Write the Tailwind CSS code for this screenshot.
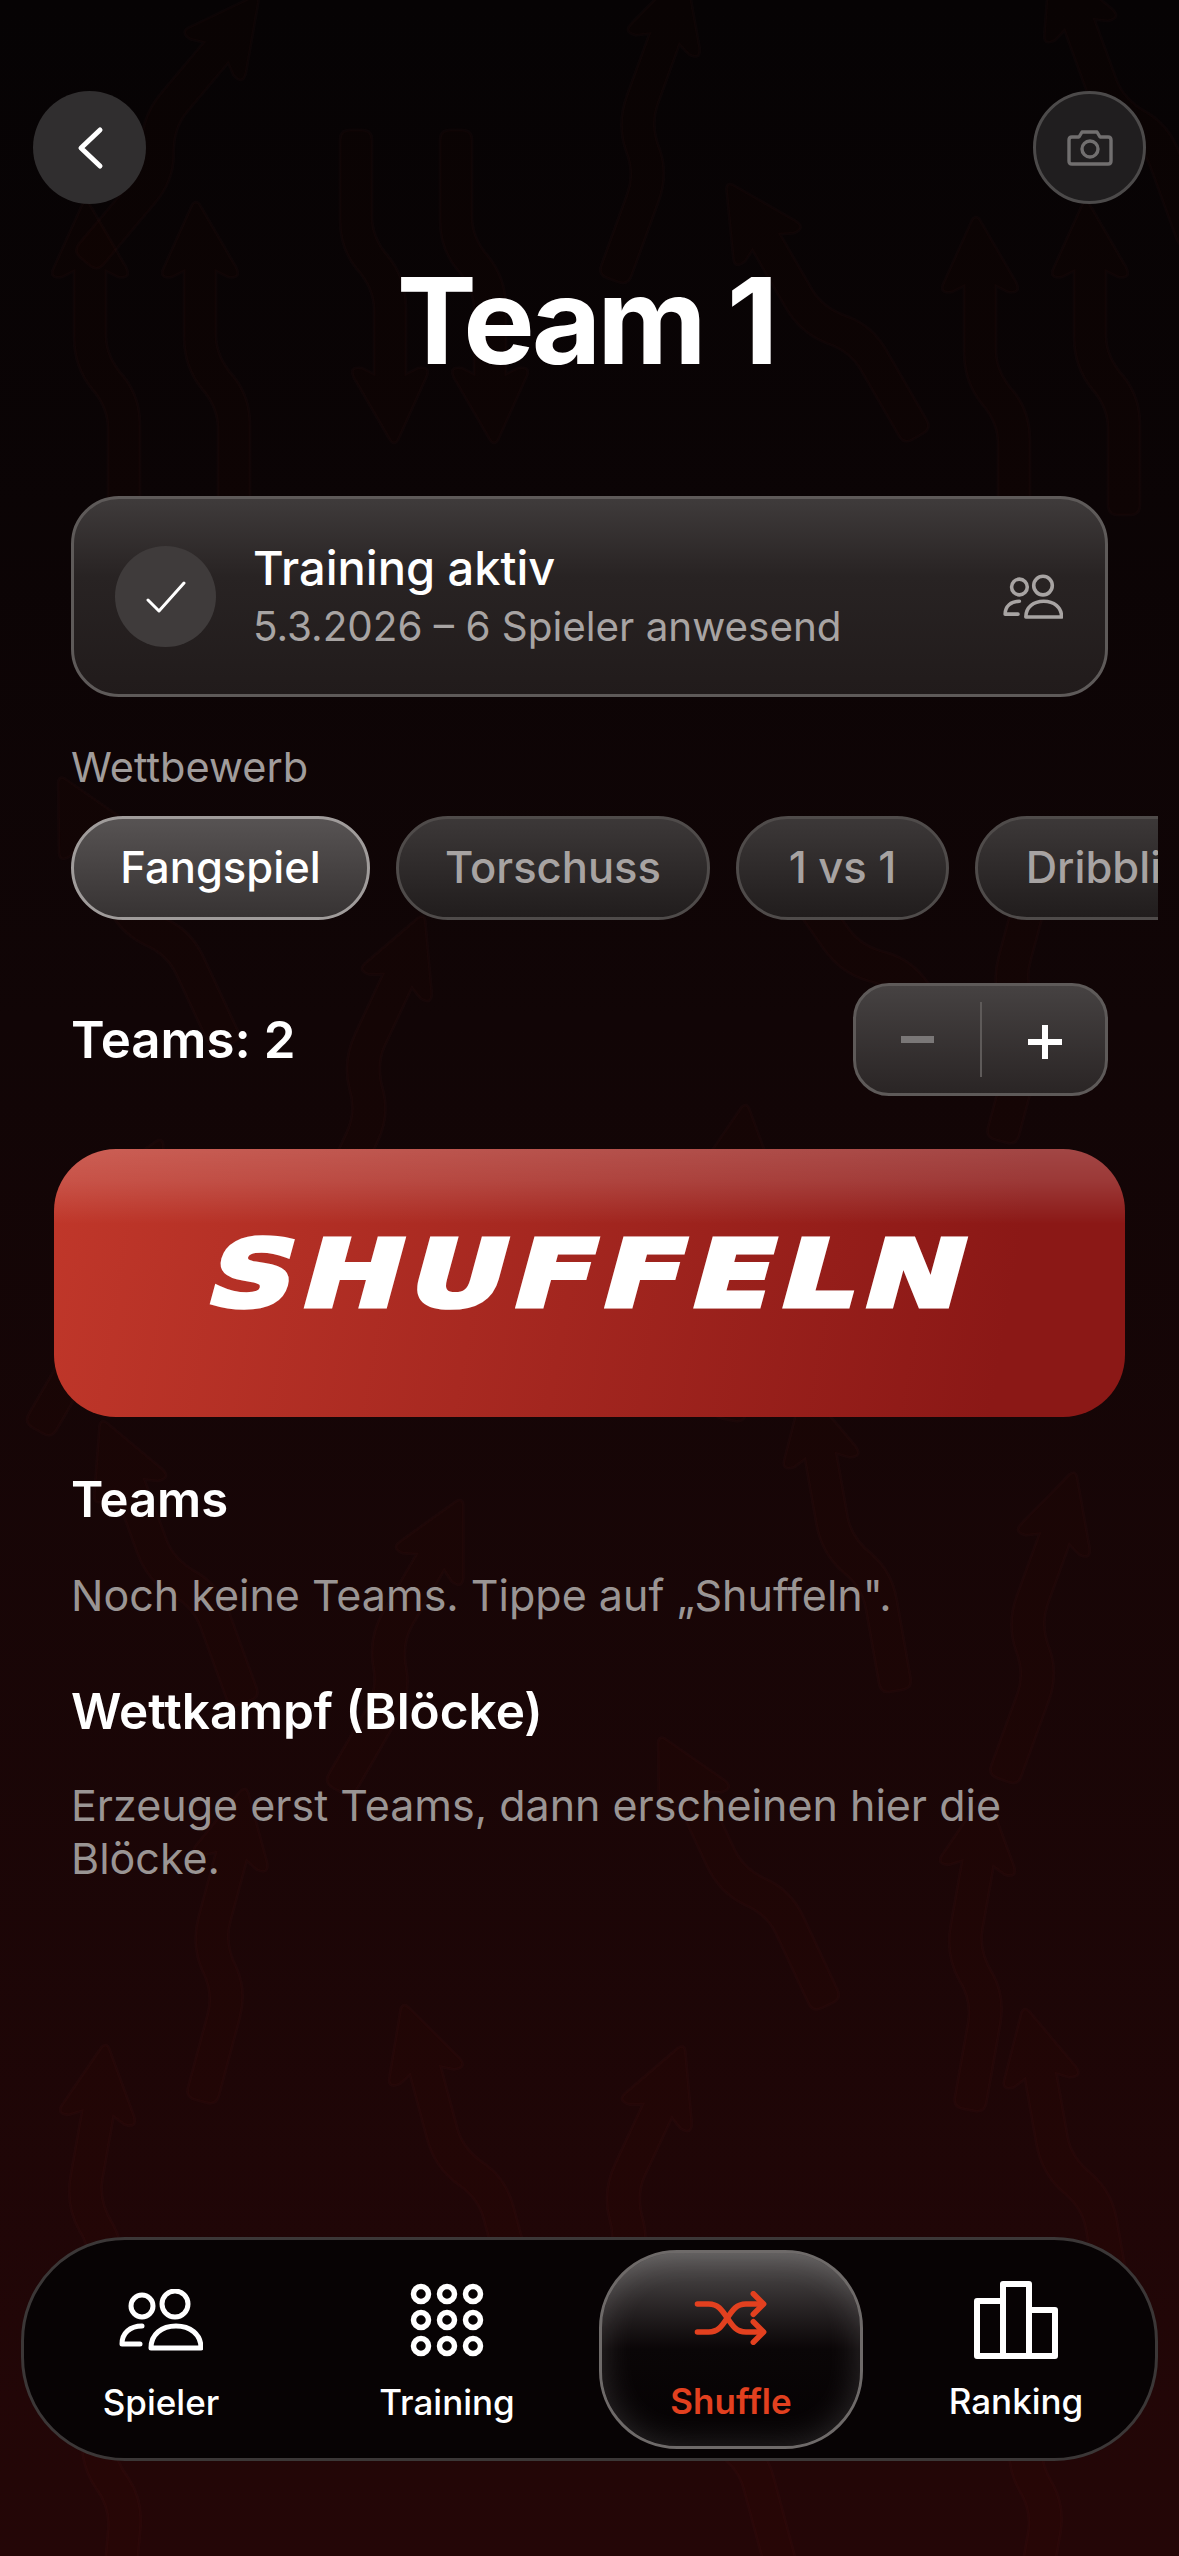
<!doctype html>
<html lang="de">

<head>
  <meta charset="UTF-8" />
  <meta name="viewport" content="width=device-width, initial-scale=1.0" />
  <title>Team 1</title>
  <script src="https://cdn.jsdelivr.net/npm/@tailwindcss/browser@4"></script>
</head>

<body>
  <div id="app"
    class="relative w-[1179px] h-[2556px] overflow-hidden flex flex-col font-['Inter',sans-serif] text-white bg-linear-to-b from-[#060304] via-[#110506] via-40% to-[#240607]">

    <!-- faint arrow pattern -->
    <svg class="absolute inset-0 w-full h-full" viewBox="0 0 1179 2556" fill="none" aria-hidden="true">
      <defs>
        <path id="swoop" fill="#ff2a10" fill-opacity=".014" stroke="#ff9080" stroke-opacity=".022" stroke-width="3"
          d="M50 0 86 62q6 12-8 10l-12-6v64q0 22 18 42 16 20 16 48v80q0 10-10 10H78q-10 0-10-10v-76q0-22-16-40-18-22-18-52V66l-12 6q-14 2-8-10L42 0q4-6 8 0Z" />
      </defs>
      <use href="#swoop" transform="translate(40 205)" />
      <use href="#swoop" transform="translate(150 205)" />
      <use href="#swoop" transform="translate(440 440) rotate(180)" />
      <use href="#swoop" transform="translate(540 440) rotate(180)" />
      <use href="#swoop" transform="translate(690 210) rotate(-30)" />
      <use href="#swoop" transform="translate(930 220)" />
      <use href="#swoop" transform="translate(1040 205)" />
      <use href="#swoop" transform="translate(220 -30) rotate(40)" />
      <use href="#swoop" transform="translate(640 -40) rotate(20)" />
      <use href="#swoop" transform="translate(1010 -20) rotate(-20)" />
      <use href="#swoop" transform="translate(20 800) rotate(-25)" />
      <use href="#swoop" transform="translate(380 900) rotate(25)" />
      <use href="#swoop" transform="translate(720 860) rotate(-35)" />
      <use href="#swoop" transform="translate(1000 820) rotate(15)" />
      <use href="#swoop" transform="translate(120 1120) rotate(30)" />
      <use href="#swoop" transform="translate(700 1100) rotate(10)" />
      <use href="#swoop" transform="translate(60 1440) rotate(-20)" />
      <use href="#swoop" transform="translate(420 1480) rotate(30)" />
      <use href="#swoop" transform="translate(760 1400) rotate(-10)" />
      <use href="#swoop" transform="translate(1030 1460) rotate(20)" />
      <use href="#swoop" transform="translate(200 1780) rotate(15)" />
      <use href="#swoop" transform="translate(620 1760) rotate(-25)" />
      <use href="#swoop" transform="translate(940 1790) rotate(10)" />
      <use href="#swoop" transform="translate(60 2040) rotate(10)" />
      <use href="#swoop" transform="translate(360 2020) rotate(-15)" />
      <use href="#swoop" transform="translate(640 2030) rotate(25)" />
      <use href="#swoop" transform="translate(980 2020) rotate(-10)" />
      <use href="#swoop" transform="translate(60 2300) rotate(5)" />
      <use href="#swoop" transform="translate(620 2290) rotate(-15)" />
      <use href="#swoop" transform="translate(1000 2300) rotate(10)" />
    </svg>

    <!-- header -->
    <div class="relative flex justify-between px-[33px] pt-[91px]">
      <button class="w-[113px] h-[113px] rounded-full bg-[#302e2f] flex items-center justify-center">
        <svg class="w-[32px] h-[44px]" viewBox="0 0 32 44" fill="none" stroke="white" stroke-width="5"
          stroke-linecap="round" stroke-linejoin="round">
          <path d="M26 4 7 22l19 18" />
        </svg>
      </button>
      <button class="w-[113px] h-[113px] rounded-full bg-[#201e1f] border-[3px] border-[#4c4a4a] flex items-center justify-center">
        <svg class="w-[46px] h-[36px]" viewBox="0 0 46 36" fill="none" stroke="#716f6f" stroke-width="3.4"
          stroke-linejoin="round">
          <path d="M2 10q0-3 3-3h7l3-5h15l3 5h8q3 0 3 3v21q0 3-3 3H5q-3 0-3-3Z" />
          <circle cx="23" cy="19" r="8" />
        </svg>
      </button>
    </div>

    <h1 class="relative text-center text-[120px] leading-[150px] font-bold tracking-[-0.035em] mt-[42px] pr-[8px]">Team 1</h1>

    <!-- training card -->
    <section class="relative mx-[71px] mt-[100px] h-[201px] rounded-[48px] border-[3px] border-[#5e5a59] bg-linear-to-b from-[#3f3b3b] via-[#282323] via-40% to-[#211b1b] flex items-center pl-[41px] pr-[42px]">
      <div class="w-[101px] h-[101px] rounded-full bg-[#3f3b3b] flex items-center justify-center">
        <svg class="w-[40px] h-[34px]" viewBox="0 0 40 34" fill="none" stroke="white" stroke-width="3"
          stroke-linecap="round" stroke-linejoin="round">
          <path d="M2 20 13 31 38 3" />
        </svg>
      </div>
      <div class="ml-[37px] flex-1">
        <p class="text-[47px] leading-[58px] font-medium">Training aktiv</p>
        <p class="text-[40.4px] leading-[54px] mt-[3px] text-[#a8a4a3]">5.3.2026 – 6 Spieler anwesend</p>
      </div>
      <svg class="w-[60px] h-[46px]" viewBox="0 0 84 62" fill="none" stroke="#a8a4a3" stroke-width="5"
        stroke-linejoin="round" stroke-linecap="round">
        <circle cx="23" cy="17" r="11" />
        <circle cx="56" cy="15" r="13" />
        <path d="M32 59c0-14 11-22 25-22s25 8 25 22Z" />
        <path d="M23 37C11 37 3 44 3 55h18" />
      </svg>
    </section>

    <p class="relative mx-[71px] mt-[45px] text-[41.5px] leading-[50px] text-[#a09c9b]">Wettbewerb</p>

    <!-- competition chips -->
    <div class="relative ml-[71px] mr-[21px] mt-[24px] flex gap-[26px] overflow-hidden">
      <span class="shrink-0 w-[299px] h-[104px] rounded-full border-[3px] border-[#a09c9b] bg-linear-to-b from-[#575353] to-[#373333] flex items-center justify-center text-[43.5px] font-medium">Fangspiel</span>
      <span class="shrink-0 w-[314px] h-[104px] rounded-full border-[3px] border-[#4f4b4a] bg-linear-to-b from-[#3c3838] to-[#211d1d] flex items-center justify-center text-[43.5px] font-medium text-[#a7a3a2]">Torschuss</span>
      <span class="shrink-0 w-[213px] h-[104px] rounded-full border-[3px] border-[#4f4b4a] bg-linear-to-b from-[#3c3838] to-[#211d1d] flex items-center justify-center text-[43.5px] font-medium text-[#a7a3a2]">1 vs 1</span>
      <span class="shrink-0 w-[290px] h-[104px] rounded-full border-[3px] border-[#4f4b4a] bg-linear-to-b from-[#3c3838] to-[#211d1d] flex items-center justify-center text-[43.5px] font-medium text-[#a7a3a2]">Dribbling</span>
    </div>

    <!-- team count -->
    <div class="relative mx-[71px] mt-[63px] flex items-start justify-between">
      <p class="text-[51px] leading-[60px] font-semibold mt-[27px]">Teams: 2</p>
      <div class="w-[255px] h-[113px] rounded-[36px] border-[3px] border-[#5e5a59] bg-linear-to-b from-[#464242] to-[#2a2525] flex items-center">
        <span class="flex-1 flex justify-center">
          <span class="w-[33px] h-[7px] bg-[#7a7777]"></span>
        </span>
        <span class="w-[2px] h-[75px] bg-[#5e5a59]"></span>
        <span class="flex-1 flex justify-center">
          <svg class="w-[34px] h-[34px] ml-[4px] mt-[4px]" viewBox="0 0 34 34" fill="white">
            <path d="M14 0h6v14h14v6H20v14h-6V20H0v-6h14Z" />
          </svg>
        </span>
      </div>
    </div>

    <!-- shuffle button -->
    <button class="relative mx-[54px] mt-[53px] h-[268px] rounded-[62px] bg-[linear-gradient(180deg,rgba(255,255,255,.2)_0%,rgba(255,255,255,.14)_12%,rgba(255,255,255,0)_28%),linear-gradient(100deg,#c0372a_0%,#8b1816_88%)] flex items-center justify-center">
      <span class="block text-[92px] leading-none font-black font-['DejaVu_Sans',sans-serif] tracking-[7px] scale-x-[1.275] skew-x-[-12deg] [-webkit-text-stroke:5px_white] mt-[-16px] ml-[8px]">SHUFFELN</span>
    </button>

    <!-- results -->
    <h2 class="relative mx-[71px] mt-[53px] text-[49px] leading-[60px] font-semibold">Teams</h2>
    <p class="relative mx-[71px] mt-[39px] text-[43px] leading-[53px] text-[#9a9594]">Noch keine Teams. Tippe auf „Shuffeln".</p>
    <h2 class="relative mx-[71px] mt-[59px] text-[49.5px] leading-[60px] font-semibold">Wettkampf (Blöcke)</h2>
    <p class="relative mx-[71px] mt-[38px] w-[970px] text-[43px] leading-[53px] text-[#9a9594]">Erzeuge erst Teams, dann erscheinen hier die Blöcke.</p>

    <!-- bottom nav -->
    <nav class="relative mt-auto mb-[95px] mx-[21px] h-[224px] rounded-[104px] border-[3px] border-[#3b3737] bg-[#070304] grid grid-cols-[274px_298px_270px_300px] items-center text-[35px] font-medium">
      <a class="flex flex-col items-center">
        <svg class="w-[84px] h-[62px] mt-[14px] mb-[29px]" viewBox="0 0 84 62" fill="none" stroke="white" stroke-width="5"
          stroke-linejoin="round" stroke-linecap="round">
          <circle cx="23" cy="17" r="11" />
          <circle cx="56" cy="15" r="13" />
          <path d="M32 59c0-14 11-22 25-22s25 8 25 22Z" />
          <path d="M23 37C11 37 3 44 3 55h18" />
        </svg>
        <span class="leading-[44px]">Spieler</span>
      </a>
      <a class="flex flex-col items-center">
        <svg class="w-[76px] h-[74px] mt-[8px] mb-[23px]" viewBox="0 0 76 74" fill="none" stroke="white" stroke-width="5.5">
          <circle cx="12" cy="11" r="7.5" />
          <circle cx="38" cy="11" r="7.5" />
          <circle cx="64" cy="11" r="7.5" />
          <circle cx="12" cy="37" r="7.5" />
          <circle cx="38" cy="37" r="7.5" />
          <circle cx="64" cy="37" r="7.5" />
          <circle cx="12" cy="63" r="7.5" />
          <circle cx="38" cy="63" r="7.5" />
          <circle cx="64" cy="63" r="7.5" />
        </svg>
        <span class="leading-[44px]">Training</span>
      </a>
      <a class="justify-self-center w-[264px] h-[199px] rounded-[78px] border-[3px] border-[#6e6a69] bg-linear-to-b from-[#565353] via-[#0a0607] via-50% to-[#050203] shadow-[inset_0_0_34px_rgba(255,255,255,.16)] flex flex-col items-center justify-center text-[#e2401f] font-semibold">
        <svg class="w-[74px] h-[54px] mt-[16px] mb-[34px]" viewBox="0 0 76 58" fill="none" stroke="#e2401f" stroke-width="6"
          stroke-linecap="round" stroke-linejoin="round">
          <path d="M2 14h12c10 0 14 6 20 15s10 15 20 15h18" />
          <path d="M2 44h12c10 0 14-6 20-15s10-15 20-15h18" />
          <path d="M62 3l11 11-11 11" />
          <path d="M62 33l11 11-11 11" />
        </svg>
        <span class="leading-[44px]">Shuffle</span>
      </a>
      <a class="flex flex-col items-center">
        <svg class="w-[84px] h-[78px] mt-[6px] mb-[20px]" viewBox="0 0 84 78" fill="none" stroke="white" stroke-width="6"
          stroke-linejoin="round">
          <path d="M3 75V20h26v55Z" />
          <path d="M29 75V3h26v72Z" />
          <path d="M55 75V29h26v46Z" />
        </svg>
        <span class="leading-[44px]">Ranking</span>
      </a>
    </nav>
  </div>
</body>

</html>
